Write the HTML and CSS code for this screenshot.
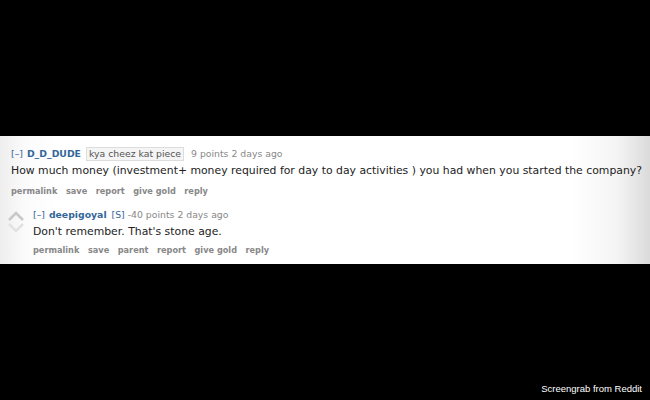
FILE: index.html
```html
<!DOCTYPE html>
<html>
<head>
<meta charset="utf-8">
<link rel="stylesheet" href="styles.css">
</head>
<body>
<div class="top"></div>
<div class="band">
  <div class="comment">
    <div class="tagline"><span class="expand">[–]</span><span class="author">D_D_DUDE</span><span class="flair">kya cheez kat piece</span><span class="score">9 points 2 days ago</span></div>
    <div class="md">How much money (investment+ money required for day to day activities ) you had when you started the company?</div>
    <ul class="buttons"><li>permalink</li><li>save</li><li>report</li><li>give gold</li><li>reply</li></ul>
  </div>
  <div class="child">
    <div class="arrows">
      <svg width="18" height="24" viewBox="0 0 18 24"><polyline points="2,10 9,3 16,10" fill="none" stroke="#c8c8c8" stroke-width="2.5"/><polyline points="2,14 9,21 16,14" fill="none" stroke="#e2e2e2" stroke-width="2.5"/></svg>
    </div>
    <div class="entry">
      <div class="tagline"><span class="expand">[–]</span><span class="author">deepigoyal</span><span class="sub">[S]</span><span class="score">-40 points 2 days ago</span></div>
      <div class="md">Don't remember. That's stone age.</div>
      <ul class="buttons"><li>permalink</li><li>save</li><li>parent</li><li>report</li><li>give gold</li><li>reply</li></ul>
    </div>
  </div>
</div>
<div class="bottom"><span class="caption">Screengrab from Reddit</span></div>
</body>
</html>
```
FILE: styles.css
```css
html, body { margin: 0; padding: 0; }
body {
  background: #000;
  width: 650px;
  height: 400px;
  overflow: hidden;
  font-family: "DejaVu Sans", Verdana, sans-serif;
}
.top { height: 136px; }
.band {
  height: 128px;
  box-sizing: border-box;
  padding: 11px 0 0 4px;
  background: linear-gradient(to right, #eeeeee 0, #fbfbfb 25px, #ffffff 60px, #ffffff 88%, #f4f4f4 95%, #dadada 100%);
}
.comment { padding-left: 7px; }
.tagline {
  height: 14px;
  line-height: 14px;
  font-size: 9.3px;
  color: #888;
  display: flex;
  align-items: center;
  white-space: nowrap;
}
.expand { color: #369; margin-right: 4px; }
.author { color: #369; font-weight: bold; margin-right: 5px; }
.flair {
  color: #545454;
  background: #f5f5f5;
  border: 1px solid #ddd;
  padding: 0 2px;
  line-height: 12px;
  margin-right: 7px;
}
.sub { color: #369; margin-right: 3px; }
.score { color: #888; }
.md {
  margin-top: 2px;
  height: 16px;
  line-height: 16px;
  font-size: 10.85px;
  color: #222;
  white-space: nowrap;
}
.buttons {
  list-style: none;
  margin: 5px 0 0;
  padding: 0;
  display: flex;
  gap: 8.5px;
  height: 14px;
  line-height: 14px;
  font-size: 8.2px;
  font-weight: bold;
  color: #888;
}
.child {
  display: flex;
  margin-top: 10px;
}
.arrows {
  width: 29px;
  padding-top: 2px;
  padding-left: 3px;
  box-sizing: border-box;
}
.arrows svg { display: block; }
.child .md { margin-top: 2px; }
.child .buttons { margin-top: 3px; }
.bottom {
  height: 136px;
  display: flex;
  justify-content: flex-end;
  align-items: flex-end;
  box-sizing: border-box;
  padding: 0 8px 5px 0;
}
.caption {
  color: #fff;
  font-family: "Liberation Sans", Arial, sans-serif;
  font-size: 9.5px;
  line-height: 12px;
}
```
